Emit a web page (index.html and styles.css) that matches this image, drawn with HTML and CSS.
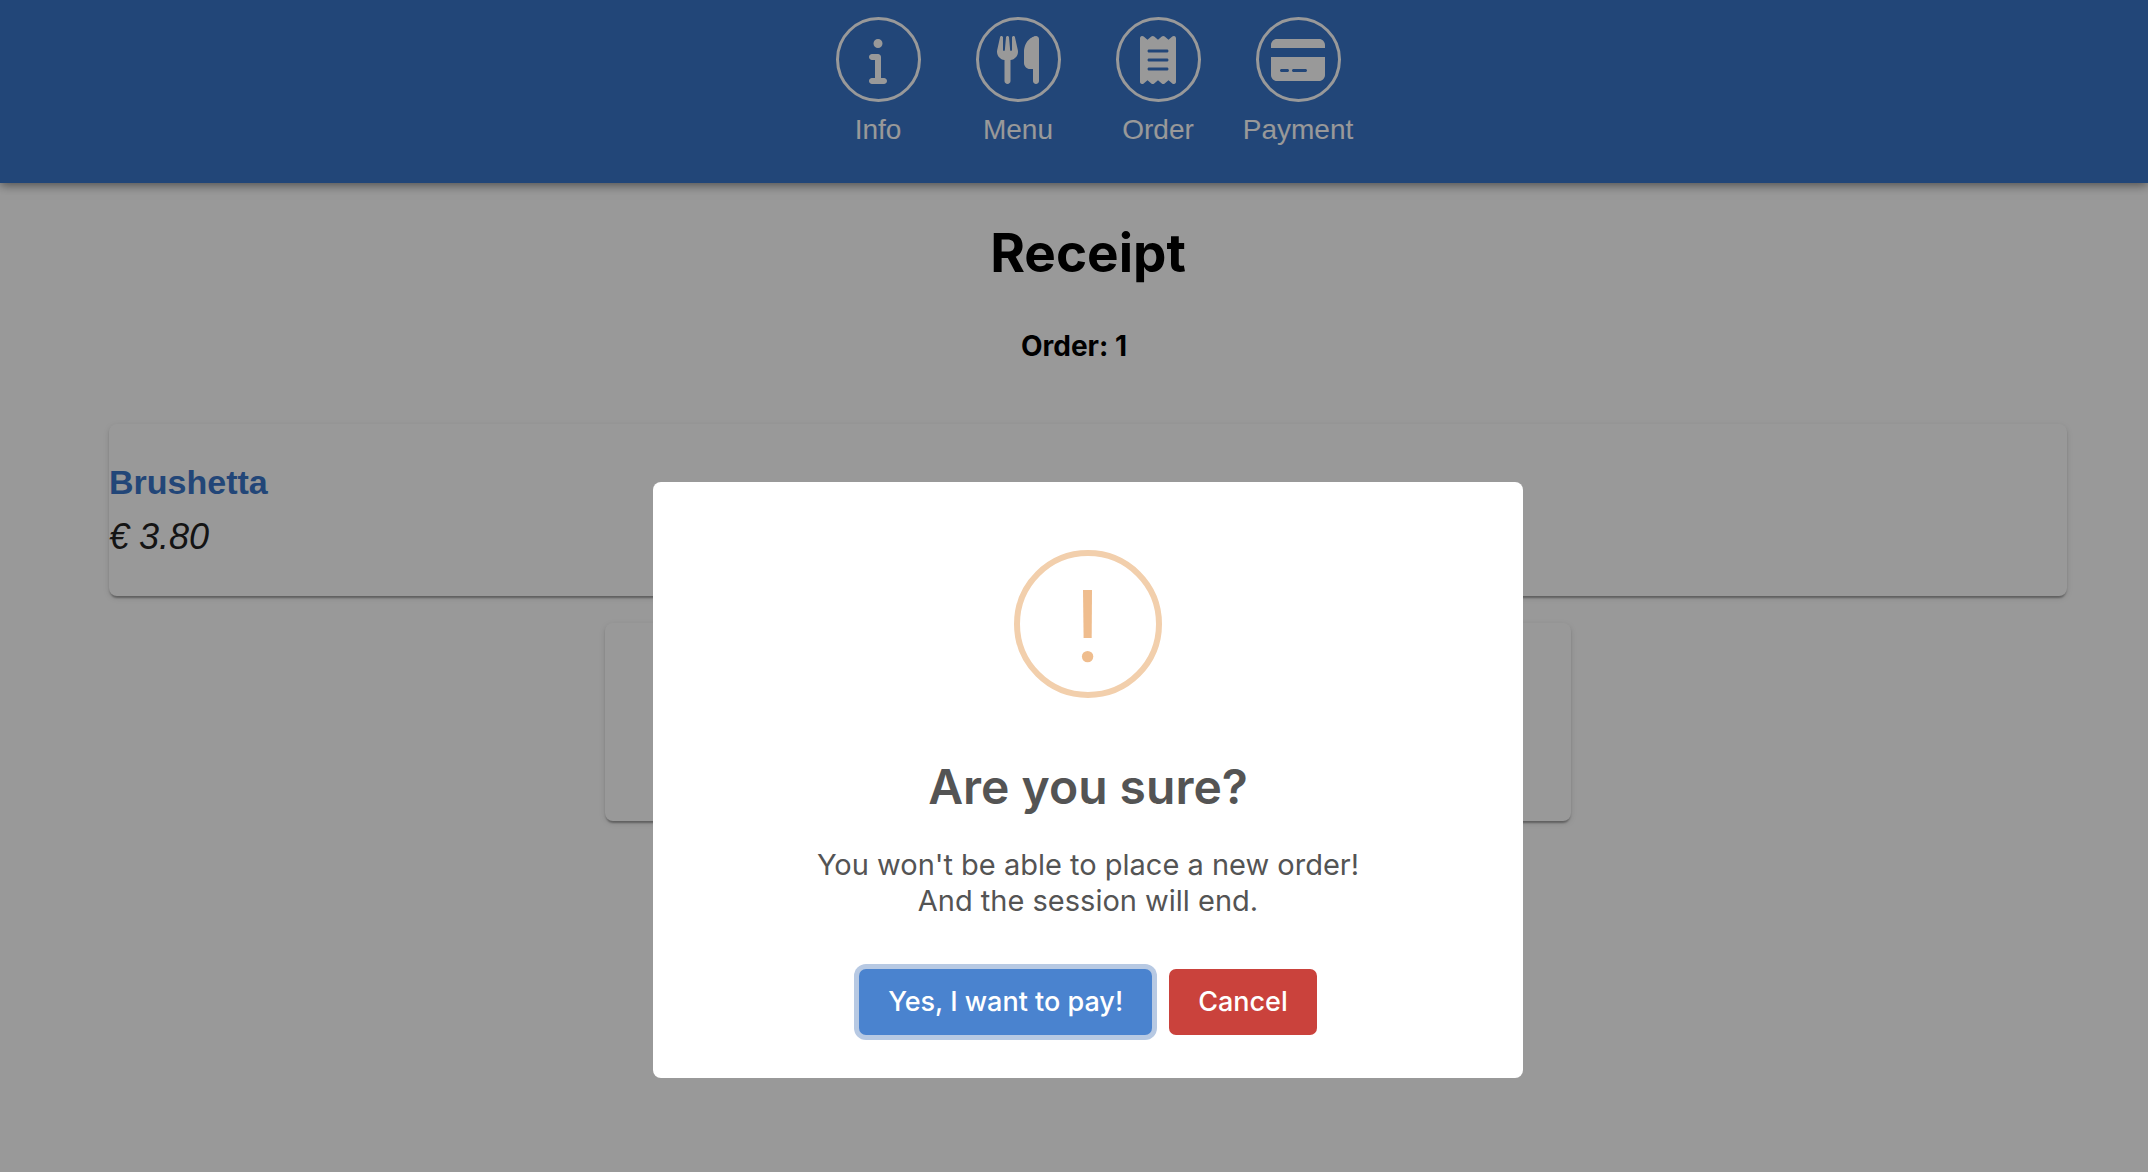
FILE: index.html
```html
<!DOCTYPE html>
<html lang="en">
<head>
<meta charset="utf-8">
<meta name="viewport" content="width=device-width, initial-scale=1">
<title>Receipt</title>
<link rel="stylesheet" href="styles.css">
</head>
<body>
<header class="topbar">
  <nav class="nav" aria-label="Main">
    <a class="nav-link" href="#info">
      <span class="nav-icon"><svg viewBox="0 0 192 512" aria-hidden="true"><path d="M48 80a48 48 0 1 1 96 0A48 48 0 1 1 48 80zM0 224c0-17.7 14.3-32 32-32H96c17.7 0 32 14.3 32 32V448h32c17.7 0 32 14.3 32 32s-14.3 32-32 32H32c-17.7 0-32-14.3-32-32s14.3-32 32-32H64V256H32c-17.7 0-32-14.3-32-32z"/></svg></span>
      <span>Info</span>
    </a>
    <a class="nav-link" href="#menu">
      <span class="nav-icon"><svg viewBox="0 0 448 512" aria-hidden="true"><path d="M416 0C400 0 288 32 288 176V288c0 35.3 28.7 64 64 64h32V480c0 17.7 14.3 32 32 32s32-14.3 32-32V352 240 32c0-17.7-14.3-32-32-32zM64 16C64 7.8 57.9 1 49.7 .1S34.2 4.6 32.4 12.5L2.1 148.8C.7 155.1 0 161.5 0 167.9c0 45.9 35.1 83.6 80 87.7V480c0 17.7 14.3 32 32 32s32-14.3 32-32V255.6c44.9-4.1 80-41.8 80-87.7c0-6.4-.7-12.8-2.1-19.1L191.6 12.5c-1.8-8-9.3-13.3-17.4-12.4S160 7.8 160 16V150.2c0 5.4-4.4 9.8-9.8 9.8c-5.1 0-9.3-3.9-9.8-9L127.9 14.6C127.2 6.3 120.3 0 112 0s-15.2 6.3-15.9 14.6L83.7 151c-.5 5.1-4.7 9-9.8 9c-5.4 0-9.8-4.4-9.8-9.8V16z"/></svg></span>
      <span>Menu</span>
    </a>
    <a class="nav-link" href="#order">
      <span class="nav-icon"><svg viewBox="0 0 384 512" aria-hidden="true"><path d="M14 2.2C22.5-1.7 32.5-.3 39.6 5.8L80 40.4 120.4 5.8c9-7.7 22.3-7.7 31.2 0L192 40.4 232.4 5.8c9-7.7 22.3-7.7 31.2 0L304 40.4 344.4 5.8c7.1-6.1 17.1-7.5 25.6-3.6s14 12.4 14 21.8V488c0 9.4-5.5 17.9-14 21.8s-18.5 2.5-25.6-3.6L304 471.6l-40.4 34.6c-9 7.7-22.3 7.7-31.2 0L192 471.6l-40.4 34.6c-9 7.7-22.3 7.7-31.2 0L80 471.6 39.6 506.2c-7.1 6.1-17.1 7.5-25.6 3.6S0 497.4 0 488V24C0 14.6 5.5 6.1 14 2.2zM96 144c-8.8 0-16 7.2-16 16s7.2 16 16 16H288c8.8 0 16-7.2 16-16s-7.2-16-16-16H96zM80 352c0 8.8 7.2 16 16 16H288c8.8 0 16-7.2 16-16s-7.2-16-16-16H96c-8.8 0-16 7.2-16 16zM96 240c-8.8 0-16 7.2-16 16s7.2 16 16 16H288c8.8 0 16-7.2 16-16s-7.2-16-16-16H96z"/></svg></span>
      <span>Order</span>
    </a>
    <a class="nav-link" href="#payment">
      <span class="nav-icon"><svg viewBox="0 0 576 512" aria-hidden="true"><path d="M64 32C28.7 32 0 60.7 0 96v32H576V96c0-35.3-28.7-64-64-64H64zM576 224H0V416c0 35.3 28.7 64 64 64H512c35.3 0 64-28.7 64-64V224zM112 352h64c8.8 0 16 7.2 16 16s-7.2 16-16 16H112c-8.8 0-16-7.2-16-16s7.2-16 16-16zm112 16c0-8.8 7.2-16 16-16H368c8.8 0 16 7.2 16 16s-7.2 16-16 16H240c-8.8 0-16-7.2-16-16z"/></svg></span>
      <span>Payment</span>
    </a>
  </nav>
</header>

<main class="page">
  <h1 class="page-title">Receipt</h1>
  <h2 class="order-title">Order: 1</h2>
  <div class="cards">
    <article class="card">
      <h3 class="item-name">Brushetta</h3>
      <p class="item-price">€ 3.80</p>
    </article>
    <section class="card card-total" aria-label="Total"></section>
  </div>
</main>

<div class="overlay">
  <div class="modal" role="dialog" aria-modal="true" aria-labelledby="modal-title" aria-describedby="modal-text">
    <svg class="modal-icon" viewBox="0 0 148 148" aria-hidden="true">
      <circle class="modal-icon-ring" cx="74" cy="74" r="71"/>
      <path class="modal-icon-mark" d="M69 40h9l-.3 48h-8.100z"/>
      <circle class="modal-icon-mark" cx="73.6" cy="106.600" r="5.700"/>
    </svg>
    <h2 class="modal-title" id="modal-title">Are you sure?</h2>
    <p class="modal-text" id="modal-text">You won't be able to place a new order!<br>And the session will end.</p>
    <div class="modal-actions">
      <button class="btn btn-confirm" type="button">Yes, I want to pay!</button>
      <button class="btn btn-cancel" type="button">Cancel</button>
    </div>
  </div>
</div>
</body>
</html>
```
FILE: styles.css
```css
:root {
  --brand: #3a75c8;
  --gutter: 28px;
  --ui: "Inter", sans-serif;
  --body: "Liberation Sans", Arial, sans-serif;
}

* {
  box-sizing: border-box;
}

body {
  margin: 0;
  min-height: 100vh;
  background: #fff;
  color: #000;
  font-family: var(--body);
}

h1, h2, h3, p {
  margin: 0;
}

.topbar {
  padding: 17px 0 36px var(--gutter);
  background: var(--brand);
  box-shadow: 0 2px 10px rgba(0, 0, 0, .5);
}

.nav {
  display: flex;
  justify-content: center;
}

.nav-link {
  display: flex;
  flex-direction: column;
  align-items: center;
  gap: 11px;
  width: 140px;
  color: #fff;
  font-size: 28px;
  line-height: 34px;
  text-decoration: none;
}

.nav-icon {
  display: flex;
  align-items: center;
  justify-content: center;
  width: 85px;
  height: 85px;
  border: 3px solid #fff;
  border-radius: 50%;
}

.nav-icon svg {
  height: 48px;
  fill: currentColor;
}

.page {
  padding-top: 38px;
}

.page-title {
  padding-left: var(--gutter);
  font: 700 53px/64px var(--ui);
  text-align: center;
}

.order-title {
  margin-top: 44px;
  font: 700 28px/34px var(--ui);
  text-align: center;
}

.cards {
  display: flex;
  flex-direction: column;
  align-items: center;
  gap: 27px;
  margin-top: 61px;
  padding: 0 81px 0 109px;
}

.card {
  width: 100%;
  padding: 38px 0 39px;
  border-radius: 8px;
  background: #fff;
  box-shadow: 0 4px 2px -2px rgba(0, 0, 0, .2), 0 2px 2px rgba(0, 0, 0, .14), 0 2px 6px rgba(0, 0, 0, .12);
}

.card-total {
  max-width: 966px;
  min-height: 198px;
}

.item-name {
  color: var(--brand);
  font-size: 34px;
  line-height: 40px;
}

.item-price {
  margin-top: 15px;
  color: #222;
  font-size: 36px;
  font-style: italic;
  line-height: 40px;
}

.overlay {
  position: fixed;
  inset: 0;
  display: flex;
  align-items: flex-end;
  justify-content: center;
  padding: 0 0 94px var(--gutter);
  background: rgba(0, 0, 0, .4);
}

.modal {
  display: flex;
  flex-direction: column;
  align-items: center;
  width: 870px;
  max-width: 100%;
  padding: 68px 32px 43px;
  border-radius: 8px;
  background: #fff;
  color: #545454;
  font-family: var(--ui);
  text-align: center;
}

.modal-icon {
  width: 148px;
  height: 148px;
}

.modal-icon-ring {
  fill: none;
  stroke: #f2cfac;
  stroke-width: 6;
}

.modal-icon-mark {
  fill: #efbd8e;
}

.modal-title {
  margin-top: 59px;
  font-size: 48px;
  font-weight: 600;
  line-height: 60px;
}

.modal-text {
  margin-top: 30px;
  font-size: 29px;
  line-height: 36px;
}

.modal-actions {
  display: flex;
  gap: 17px;
  margin-top: 50px;
}

.btn {
  padding: 16px 29px;
  border: 0;
  border-radius: 7px;
  color: #fff;
  font: 500 27px/34px var(--ui);
}

.btn-confirm {
  background: #4a83cf;
  box-shadow: 0 0 0 5px #b7c9e3;
}

.btn-cancel {
  background: #ca423c;
}
```
